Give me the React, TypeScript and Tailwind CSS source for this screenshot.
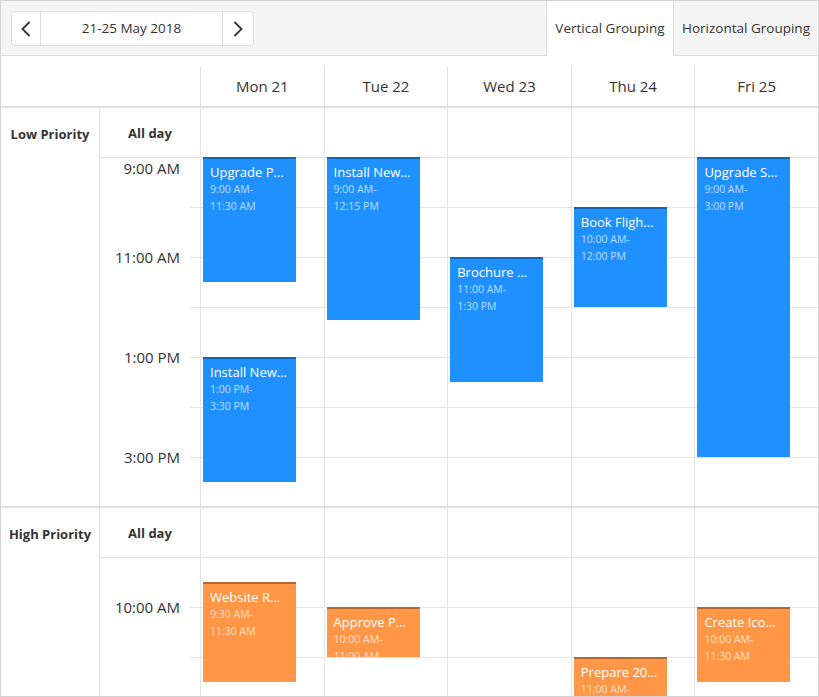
import React from "react";

type Appt = {
  day: number;
  start: number;
  end: number;
  title: string;
  from: string;
  to: string;
};

const days = ["Mon 21", "Tue 22", "Wed 23", "Thu 24", "Fri 25"];
const hours = [9, 10, 11, 12, 13, 14, 15];

const groups = [
  {
    name: "Low Priority",
    color: "bg-[#1e90ff]",
    labels: { 9: "9:00 AM", 11: "11:00 AM", 13: "1:00 PM", 15: "3:00 PM" } as Record<number, string>,
    appts: [
      { day: 0, start: 9, end: 11.5, title: "Upgrade P…", from: "9:00 AM-", to: "11:30 AM" },
      { day: 0, start: 13, end: 15.5, title: "Install New…", from: "1:00 PM-", to: "3:30 PM" },
      { day: 1, start: 9, end: 12.25, title: "Install New…", from: "9:00 AM-", to: "12:15 PM" },
      { day: 2, start: 11, end: 13.5, title: "Brochure …", from: "11:00 AM-", to: "1:30 PM" },
      { day: 3, start: 10, end: 12, title: "Book Fligh…", from: "10:00 AM-", to: "12:00 PM" },
      { day: 4, start: 9, end: 15, title: "Upgrade S…", from: "9:00 AM-", to: "3:00 PM" },
    ] as Appt[],
  },
  {
    name: "High Priority",
    color: "bg-[#ff9747]",
    labels: { 10: "10:00 AM", 12: "12:00 PM", 14: "2:00 PM" } as Record<number, string>,
    appts: [
      { day: 0, start: 9.5, end: 11.5, title: "Website R…", from: "9:30 AM-", to: "11:30 AM" },
      { day: 1, start: 10, end: 11, title: "Approve P…", from: "10:00 AM-", to: "11:00 AM" },
      { day: 3, start: 11, end: 13, title: "Prepare 20…", from: "11:00 AM-", to: "1:00 PM" },
      { day: 4, start: 10, end: 11.5, title: "Create Ico…", from: "10:00 AM-", to: "11:30 AM" },
    ] as Appt[],
  },
];

const Chevron = ({ dir }: { dir: "left" | "right" }) => (
  <svg width="10" height="16" viewBox="0 0 10 16" fill="none">
    <polyline
      points={dir === "left" ? "8.5,1 1.5,8 8.5,15" : "1.5,1 8.5,8 1.5,15"}
      stroke="#333"
      strokeWidth="1.8"
    />
  </svg>
);

const Group = ({ group }: { group: (typeof groups)[number] }) => (
  <div className="flex border-b-2 border-[#e0e0e0]">
    {/* group label */}
    <div className="w-[99px] shrink-0 border-r border-[#e5e5e5]">
      <div className="h-[49px] pt-[4px] flex items-center justify-center text-[13px] font-bold text-[#333]">
        {group.name}
      </div>
    </div>

    {/* time panel */}
    <div className="w-[100px] shrink-0">
      <div className="h-[50px] pt-[3px] border-b border-[#e5e5e5] flex items-center justify-center text-[13px] font-bold text-[#333]">
        All day
      </div>
      {hours.map((h, i) => {
        const last = i === hours.length - 1;
        const label = group.labels[h];
        return (
          <div key={h} className={`flex ${last ? "h-[48px]" : "h-[50px]"}`}>
            <div className="flex-1 pr-[10px] text-right text-[15px] leading-[20px] text-[#333]">
              {label && (
                <div className={h === 9 ? "" : "-translate-y-[11px]"}>{label}</div>
              )}
            </div>
            <div className={`w-[10px] ${last ? "" : "border-b border-[#e5e5e5]"}`} />
          </div>
        );
      })}
    </div>

    {/* day columns */}
    {days.map((d, di) => (
      <div key={d} className="flex-1 border-l border-[#e5e5e5]">
        <div className="h-[50px] border-b border-[#e5e5e5]" />
        <div className="relative">
          {hours.map((h, i) => (
            <div
              key={h}
              className={i === hours.length - 1 ? "h-[48px]" : "h-[50px] border-b border-[#e5e5e5]"}
            />
          ))}
          {group.appts
            .filter((a) => a.day === di)
            .map((a, ai) => (
              <div
                key={ai}
                className={`absolute left-[2px] w-[93px] ${group.color} border-t-2 border-black/30 overflow-hidden px-[7px] pt-[4px] text-white`}
                style={{ top: (a.start - 9) * 50 - 1, height: (a.end - a.start) * 50 }}
              >
                <div className="whitespace-nowrap text-[13px] leading-[18px]">{a.title}</div>
                <div className="whitespace-nowrap text-[10.5px] leading-[17px] text-white/70">{a.from}</div>
                <div className="whitespace-nowrap text-[10.5px] leading-[17px] text-white/70">{a.to}</div>
              </div>
            ))}
        </div>
      </div>
    ))}
  </div>
);

export default function App() {
  return (
    <div
      className="w-[819px] h-[697px] border border-[#d3d3d3] bg-white overflow-hidden"
      style={{ fontFamily: '"Open Sans", "Noto Sans", sans-serif' }}
    >
      {/* toolbar */}
      <div className="h-[55px] flex bg-[#f5f5f5]">
        <div className="flex-1 border-b border-[#dddddd] pl-[10px] pt-[10px]">
          <div className="flex h-[35px] w-[243px] rounded-[4px] border border-[#dddddd] bg-white">
            <div className="w-[29px] flex items-center justify-center border-r border-[#dddddd]">
              <Chevron dir="left" />
            </div>
            <div className="w-[181px] flex items-center justify-center text-[13.5px] text-[#333]">
              21-25 May 2018
            </div>
            <div className="flex-1 flex items-center justify-center border-l border-[#dddddd]">
              <Chevron dir="right" />
            </div>
          </div>
        </div>
        <div className="w-[127px] flex items-center justify-center border-l border-[#dddddd] bg-white text-[13.5px] text-[#333]">
          Vertical Grouping
        </div>
        <div className="w-[145px] flex items-center justify-center border-l border-b border-[#dddddd] text-[13.5px] text-[#333]">
          Horizontal Grouping
        </div>
      </div>

      {/* day header */}
      <div className="flex h-[52px] border-b-2 border-[#e0e0e0]">
        <div className="w-[199px] shrink-0" />
        {days.map((d) => (
          <div
            key={d}
            className="flex-1 mt-[10px] border-l border-[#e5e5e5] flex items-center justify-center text-[15px] text-[#333]"
          >
            {d}
          </div>
        ))}
      </div>

      {groups.map((g) => (
        <Group key={g.name} group={g} />
      ))}
    </div>
  );
}
